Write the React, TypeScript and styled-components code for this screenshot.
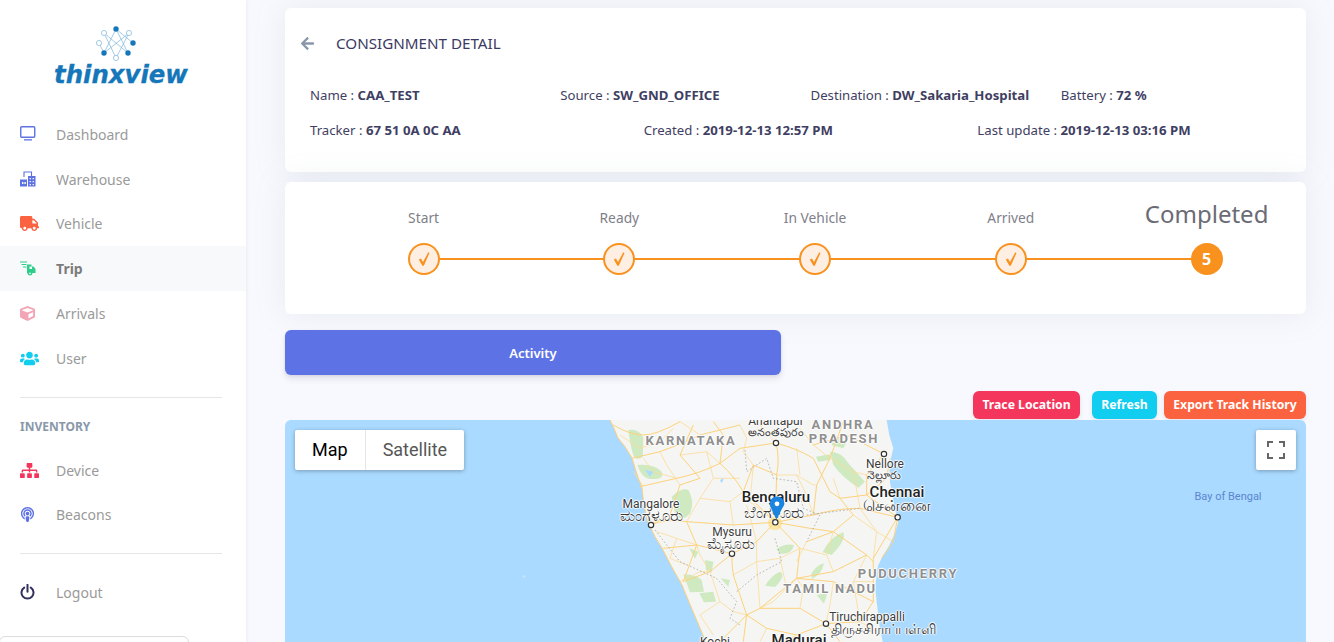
import * as React from 'react'
import styled, { createGlobalStyle } from 'styled-components'
import { FaCube, FaSitemap, FaTruck, FaUsers, FaPodcast, FaArrowLeft } from 'react-icons/fa'

const GlobalStyle = createGlobalStyle`
  html, body {
    margin: 0;
    height: 100%;
    overflow: hidden;
    background: #f8f9fe;
    font-family: "Noto Sans", "Open Sans", sans-serif;
  }
`

const Page = styled.div`
  display: flex;
  height: 642px;
  overflow: hidden;
`

const Sidebar = styled.aside`
  width: 246px;
  flex: none;
  background: #fff;
  box-shadow: 0 0 4px rgba(136, 152, 170, 0.2);
  display: flex;
  flex-direction: column;
`

const Logo = styled.div`
  height: 112px;
  flex: none;
  box-sizing: border-box;
  padding-top: 26px;
  display: flex;
  flex-direction: column;
  align-items: center;
  padding-right: 15px;
`

const LogoName = styled.div`
  font-family: "DejaVu Sans", sans-serif;
  font-style: italic;
  font-weight: 700;
  font-size: 24.4px;
  line-height: 26px;
  margin-left: 11px;
  color: #1577b9;
  -webkit-text-stroke: 0.3px #1577b9;
`

const NavItem = styled.div<{ $active?: boolean }>`
  height: 44.8px;
  flex: none;
  display: flex;
  align-items: center;
  padding-left: 20px;
  font-size: 14px;
  color: ${p => (p.$active ? '#7c7c7c' : '#9a9a9a')};
  font-weight: ${p => (p.$active ? 700 : 400)};
  background: ${p => (p.$active ? '#f8f9fa' : 'transparent')};
`

const NavIcon = styled.span<{ $color: string }>`
  width: 36px;
  flex: none;
  display: flex;
  align-items: center;
  color: ${p => p.$color};
`

const Divider = styled.hr<{ $top: number; $bottom: number }>`
  border: 0;
  border-top: 1px solid #e6e6e6;
  margin: ${p => p.$top}px 24px ${p => p.$bottom}px 20px;
  flex: none;
`

const NavHeading = styled.div`
  font-size: 12px;
  line-height: 18px;
  font-weight: 700;
  color: #8898aa;
  padding-left: 20px;
  margin: 1px 0 12px;
`

const BottomBox = styled.div`
  width: 190px;
  height: 40px;
  margin: 21px 0 0 -1px;
  flex: none;
  box-sizing: border-box;
  border: 1px solid #ddd;
  border-radius: 6px;
`

const Main = styled.main`
  width: 1021px;
  margin-left: 39px;
  padding-top: 8px;
  flex: none;
`

const Card = styled.section<{ $height: number; $bottom: number }>`
  height: ${p => p.$height}px;
  margin-bottom: ${p => p.$bottom}px;
  box-sizing: border-box;
  background: #fff;
  border-radius: 6px;
  box-shadow: 0 0 32px rgba(136, 152, 170, 0.15);
`

const TitleRow = styled.div`
  display: flex;
  align-items: center;
  height: 24px;
  padding: 23px 0 0 15px;
  font-size: 15.2px;
  color: #3b3a63;
`

const BackIcon = styled.span`
  width: 36px;
  display: flex;
  color: #8898aa;
`

const InfoRow = styled.div<{ $cols: number; $top: number }>`
  display: grid;
  grid-template-columns: repeat(${p => p.$cols}, 1fr);
  width: 1001px;
  margin: ${p => p.$top}px 0 0 25px;
  font-size: 13.2px;
  line-height: 18px;
  color: #3f3e63;
  b {
    font-weight: 700;
  }
`

const Steps = styled.div`
  display: grid;
  grid-template-columns: repeat(5, 195.75px);
  margin-left: 40.6px;
`

const Step = styled.div`
  position: relative;
  display: flex;
  flex-direction: column;
  align-items: center;
  width: 32px;
  justify-self: start;
  margin-left: 82px;
`

const StepLabel = styled.div<{ $big?: boolean }>`
  height: 61px;
  box-sizing: border-box;
  display: flex;
  align-items: flex-end;
  white-space: nowrap;
  font-size: ${p => (p.$big ? 24 : 13.8)}px;
  line-height: ${p => (p.$big ? 36 : 20)}px;
  color: ${p => (p.$big ? '#6b6b75' : '#80808a')};
  padding-bottom: ${p => (p.$big ? 11 : 15)}px;
`

const Dot = styled.div<{ $done?: boolean }>`
  width: 32px;
  height: 32px;
  box-sizing: border-box;
  border-radius: 50%;
  border: 2px solid #f9911f;
  background: ${p => (p.$done ? '#ffefe2' : '#f9911f')};
  color: ${p => (p.$done ? '#f9911f' : '#fff')};
  display: flex;
  align-items: center;
  justify-content: center;
  font-size: 16px;
  font-weight: 700;
  z-index: 1;
`

const Connector = styled.div`
  position: absolute;
  left: 16px;
  top: 76px;
  width: 195.75px;
  height: 2px;
  background: #f9911f;
`

const ActivityButton = styled.button`
  display: block;
  width: 496px;
  height: 45px;
  border: 0;
  border-radius: 6px;
  background: #5d72e4;
  color: #fff;
  font-family: inherit;
  font-size: 13px;
  font-weight: 600;
  padding: 0;
  box-shadow: 0 4px 6px rgba(50, 50, 93, 0.11), 0 1px 3px rgba(0, 0, 0, 0.08);
  margin-bottom: 16px;
`

const Actions = styled.div`
  display: flex;
  justify-content: flex-end;
  gap: 7px;
  margin-bottom: 1px;
`

const SmallButton = styled.button<{ $bg: string; $width: number; $after?: number }>`
  width: ${p => p.$width}px;
  height: 28px;
  border: 0;
  border-radius: 6px;
  padding: 0 0 1px;
  background: ${p => p.$bg};
  color: #fff;
  font-family: inherit;
  font-size: 12.2px;
  font-weight: 700;
  white-space: nowrap;
  margin-right: ${p => p.$after ?? 0}px;
  box-shadow: 0 2px 4px rgba(50, 50, 93, 0.1);
`

const MapBox = styled.div`
  position: relative;
  height: 300px;
  background: #aadaff;
  border-radius: 6px 6px 0 0;
  overflow: hidden;
  font-family: Roboto, sans-serif;
`

const MapArt = styled.svg`
  position: absolute;
  left: 0;
  top: 0;
`

const MapTypes = styled.div`
  position: absolute;
  left: 10px;
  top: 10px;
  height: 40px;
  display: flex;
  background: #fff;
  border-radius: 2px;
  box-shadow: 0 1px 4px rgba(0, 0, 0, 0.3);
  font-size: 18px;
  line-height: 40px;
`

const MapType = styled.div<{ $on?: boolean }>`
  padding: 0 17px;
  color: ${p => (p.$on ? '#000' : '#565656')};
  border-right: ${p => (p.$on ? '1px solid #e6e6e6' : '0')};
`

const Fullscreen = styled.div`
  position: absolute;
  right: 10px;
  top: 10px;
  width: 40px;
  height: 40px;
  background: #fff;
  border-radius: 2px;
  box-shadow: 0 1px 4px rgba(0, 0, 0, 0.3);
  display: flex;
  align-items: center;
  justify-content: center;
`

type PlaceKind = 'city' | 'big' | 'state' | 'sea'

const Place = styled.div<{ $x: number; $y: number; $kind: PlaceKind; $size?: number }>`
  position: absolute;
  left: ${p => p.$x - 285}px;
  top: ${p => p.$y - 420}px;
  transform: translate(-50%, -50%);
  white-space: nowrap;
  font-size: ${p => p.$size ?? { city: 12, big: 15, state: 13, sea: 11 }[p.$kind]}px;
  font-weight: ${p => ({ city: 400, big: 500, state: 700, sea: 400 })[p.$kind]};
  letter-spacing: ${p => (p.$kind === 'state' ? '1.7px' : '0')};
  color: ${p => ({ city: '#3c3c3c', big: '#222', state: '#8f8f8f', sea: '#5b86cf' })[p.$kind]};
  text-shadow: ${p =>
    p.$kind === 'sea'
      ? 'none'
      : '-1px 0 1px #fff, 1px 0 1px #fff, 0 -1px 1px #fff, 0 1px 1px #fff'};
  font-family: Roboto, "Noto Sans", "DejaVu Sans", sans-serif;
`

const Pin = styled.svg`
  position: absolute;
  left: 484px;
  top: 76px;
`

type PlaceItem = [string, number, number, PlaceKind, number?]

const places: PlaceItem[] = [
  ['Anantapur', 776, 421, 'city'],
  ['అనంతపురం', 776, 433, 'city', 11],
  ['ANDHRA', 843, 424, 'state'],
  ['PRADESH', 844, 438, 'state'],
  ['KARNATAKA', 691, 440, 'state'],
  ['Nellore', 885, 464, 'city'],
  ['నెల్లూరు', 884, 476, 'city', 11],
  ['Chennai', 897, 492, 'big'],
  ['சென்னை', 897, 506, 'city', 16],
  ['Bengaluru', 776, 497, 'big'],
  ['ಬೆಂಗಳೂರು', 774, 512, 'city', 16],
  ['Mangalore', 651, 504, 'city'],
  ['ಮಂಗಳೂರು', 651, 515, 'city', 16],
  ['Mysuru', 732, 532, 'city'],
  ['ಮೈಸೂರು', 731, 544, 'city', 15],
  ['PUDUCHERRY', 908, 573, 'state'],
  ['TAMIL NADU', 830, 588, 'state'],
  ['Tiruchirappalli', 867, 617, 'city'],
  ['திருச்சிராப்பள்ளி', 883, 630, 'city', 14],
  ['Madurai', 799, 640, 'big'],
  ['Kochi', 715, 642, 'city'],
  ['Bay of Bengal', 1228, 496, 'sea'],
]

// coordinates below are in 3x units, origin at the crop corner (600, 415)
const westCoast =
  'M30 15 L40 35 L54 69 L75 95 L96 129 L110 175 L126 219 L132 270 L144 321 L165 365 L186 399 L215 455 L246 510 L275 580 L300 639 L321 690'
const land =
  westCoast +
  ' L850 690 L840 640 L835 600 L830 560 L826 520 L830 470 L835 450 L850 420 L866 395 L885 355 L895 320 L885 280 L878 245 L870 200 L868 150 L880 100 L868 60 L860 15 Z'

const greens = [
  'M85 45 Q120 40 130 70 L128 125 Q110 140 100 120 Q90 90 85 45 Z',
  'M112 150 Q160 145 185 170 Q195 195 150 192 Q125 190 112 150 Z',
  'M215 245 Q245 215 265 225 Q285 260 270 295 Q245 325 225 295 Z',
  'M690 110 Q725 110 745 145 L795 200 L775 218 Q725 185 700 150 Z',
  'M648 125 L690 118 L690 135 L655 140 Z',
  'M668 412 Q690 365 730 352 Q740 375 695 420 Z',
  'M635 475 Q650 450 672 445 Q665 480 635 492 Z',
  'M495 512 Q515 480 540 470 Q560 480 525 516 Z',
  'M530 402 Q555 385 582 390 Q575 420 540 416 Z',
  'M250 478 Q290 480 305 495 L312 530 L270 532 Z',
  'M298 535 L340 530 L348 560 L312 562 Z',
  'M315 435 L340 440 L335 472 L318 465 Z',
  'M268 400 L295 410 L285 432 Z',
  'M650 540 L682 535 L672 566 Z',
  'M362 490 L390 495 L385 515 Z',
  'M700 60 L740 80 L730 100 L695 90 Z',
]

const roads = [
  'M40 30 Q90 60 130 60 T240 20',
  'M95 130 L180 110 Q240 90 300 60 L420 30',
  'M120 215 L230 190 Q300 175 360 145 Q400 180 430 230 L525 320',
  'M150 330 Q200 310 260 320 L400 330 L525 322',
  'M150 330 L210 300 L240 210 L300 190',
  'M190 400 L290 390 L396 416 L470 380 L525 322',
  'M396 416 Q395 450 400 480 L440 600 L430 680',
  'M396 416 L330 470 L250 500',
  'M528 84 Q540 130 530 180 L526 322',
  'M528 84 Q590 100 640 130 L690 230 L720 250 L800 240',
  'M528 84 L420 100 L360 145',
  'M526 322 L640 300 Q710 280 780 280 L893 307',
  'M526 322 L600 400 L590 490 L480 580 L440 600',
  'M526 322 L630 340 L700 350 L800 420 L820 440',
  'M893 307 L820 430 L820 560 L780 620 L678 626',
  'M893 307 L880 380 L845 430',
  'M852 117 L800 180 L800 240 L893 307',
  'M852 117 L740 60 L640 90',
  'M678 626 L600 580 L480 580',
  'M678 626 L590 660 L560 680',
  'M440 600 L360 680',
  'M678 626 L720 680',
  'M640 300 L650 210 L690 130 L730 20',
  'M300 190 L240 120 L280 30',
  'M360 145 L370 60 L340 20',
  'M720 250 L760 300 L700 350 L620 380',
  'M590 490 L700 470 L800 420',
  'M430 230 L460 150 L530 180',
  'M260 320 L290 390 L250 500',
  'M820 560 L700 500 L590 490',
  'M440 600 L500 640 L590 660',
  'M800 240 L860 190 L870 130',
]

const minorRoads = [
  'M60 60 L120 100 L180 80 L220 40',
  'M130 130 L160 170 L230 190',
  'M180 110 L200 150 L240 210',
  'M240 120 L320 110 L360 145',
  'M420 30 L440 70 L430 110 L460 150',
  'M320 110 L340 190 L300 250 L260 320',
  'M340 190 L420 190',
  'M300 250 L390 260 L430 230',
  'M390 260 L400 330',
  'M440 270 L470 380',
  'M460 150 L450 260 L525 320',
  'M590 180 L640 210 L650 210',
  'M530 180 L590 180 L620 240 L640 300',
  'M590 100 L600 180',
  'M690 130 L760 170 L800 180',
  'M640 90 L690 130',
  'M760 170 L780 280',
  'M720 250 L700 190',
  'M170 350 L230 370 L290 390',
  'M230 370 L210 430 L260 450',
  'M330 470 L300 420 L290 390',
  'M330 470 L360 560 L400 590',
  'M400 480 L470 440 L540 430 L600 400',
  'M470 380 L470 440 L480 580',
  'M540 430 L560 520 L590 490',
  'M600 400 L680 420 L700 350',
  'M680 420 L700 470',
  'M800 420 L760 500 L780 620',
  'M700 500 L690 570 L678 626',
  'M760 500 L820 500',
  'M600 580 L610 520 L590 490',
  'M480 580 L520 560 L560 520',
  'M500 640 L480 680',
  'M780 620 L830 650',
  'M620 380 L590 440',
  'M760 300 L830 350 L880 380',
  'M830 350 L820 430',
  'M780 280 L830 350',
  'M360 560 L300 600 L340 660',
  'M400 590 L440 600',
  'M600 40 L640 90',
  'M240 20 L300 60',
  'M480 30 L528 84',
  'M100 170 L130 215',
  'M240 500 L300 470 L330 470',
]

const borders = [
  'M435 105 L440 170 L500 130 L520 190 L590 200 L610 280 L660 300 L620 380',
  'M165 345 L240 440 L350 490 L410 560 L390 610 L420 630',
  'M525 370 L545 440 L470 480 L410 530',
  'M620 300 L780 280',
]

const towns: [number, number][] = [
  [528, 84], [852, 117], [893, 307], [526, 322], [153, 330], [396, 416], [678, 626],
]

const Lines = ({ items, ...rest }: { items: string[] } & React.SVGProps<SVGGElement>) => (
  <g fill="none" {...rest}>
    {items.map(d => <path key={d} d={d} />)}
  </g>
)

const MapDrawing = () => (
  <MapArt width="1021" height="300" viewBox="0 0 1021 300">
    <g transform="translate(315 -5) scale(0.3333)">
      <path fill="#f5f5f3" d={land} />
      {greens.map(d => <path key={d} d={d} fill="#cfe9c0" />)}
      <circle cx="525" cy="325" r="21" fill="#fde7a5" />
      <Lines items={minorRoads} stroke="#fddc96" strokeWidth="2.4" strokeLinejoin="round" />
      <Lines items={roads} stroke="#fdd27a" strokeWidth="3" strokeLinejoin="round" />
      <path fill="none" stroke="#fdd07a" strokeWidth="3" d={westCoast} />
      <Lines items={borders} stroke="#a8a8a8" strokeWidth="2.4" strokeDasharray="5 6" />
      <path d="M135 165 L160 170 L150 185 Z M360 195 L372 190 L365 205 Z" fill="#aadaff" />
      {towns.map(([cx, cy]) => (
        <circle key={cx} cx={cx} cy={cy} r="8" fill="#fff" stroke="#333" strokeWidth="3.5" />
      ))}
    </g>
    <path d="M237 156 l3 -1 l1 2 l-2 1 Z" fill="#c4e4fd" />
  </MapArt>
)

const LogoMark = () => {
  const hollow = [[103, 33], [128, 33], [98, 43], [115, 58]]
  const solid = [[115, 29], [132, 43], [103, 53], [127, 53]]
  return (
    <svg width="40" height="36" viewBox="95 26 40 36">
      <path
        d="M115 29 L127 53 M115 29 L103 53 M103 33 L115 58 M128 33 L115 58 M128 33 L103 53 M98 43 L103 53 M115 29 L132 43 M103 33 L127 53"
        fill="none"
        stroke="#7db4dc"
        strokeWidth="0.7"
      />
      {hollow.map(([x, y]) => (
        <circle key={x + y} cx={x} cy={y} r="2.6" fill="#fff" stroke="#7db4dc" strokeWidth="0.7" />
      ))}
      {solid.map(([x, y]) => (
        <circle key={x + y} cx={x} cy={y} r="2.7" fill="#1577b9" />
      ))}
    </svg>
  )
}

const TvIcon = () => (
  <svg width="16" height="16" viewBox="0 0 16 16">
    <rect x="0.75" y="0.75" width="14" height="10.5" rx="1" fill="none" stroke="currentColor" strokeWidth="1.4" />
    <rect x="4" y="13.2" width="8" height="1.3" fill="currentColor" />
  </svg>
)

const WarehouseIcon = () => (
  <svg width="16" height="16" viewBox="0 0 16 16">
    <path d="M4 6V1h7.500v4" fill="none" stroke="currentColor" strokeWidth="1.1" />
    <path
      fillRule="evenodd"
      fill="currentColor"
      d="M0 8.500h7V15.500H0Z M8 5h7.500V15.500H8Z M2 11v2h1.400v-2Z M4.400 11v2h1.400v-2Z M9.600 7v1.300h1.300V7Z M12.600 7v1.300h1.300V7Z M9.600 10v1.300h1.300V10Z M12.600 10v1.300h1.300V10Z M9.600 13v1.300h1.300V13Z M12.600 13v1.300h1.300V13Z"
    />
  </svg>
)

const TripIcon = () => (
  <svg width="16" height="15" viewBox="0 0 16 15">
    <rect x="0" y="0.5" width="7" height="1" fill="currentColor" />
    <rect x="1.500" y="3" width="5" height="1" fill="currentColor" />
    <rect x="3" y="5.500" width="3.500" height="1" fill="currentColor" />
    <path d="M7 3.500h4.500v2h2L15.500 8v4H7Z" fill="currentColor" />
    <rect x="9.500" y="5.500" width="2.500" height="2.500" fill="#f8f9fa" />
    <circle cx="10" cy="12.300" r="2.300" fill="currentColor" />
    <circle cx="10" cy="12.300" r="0.900" fill="#f8f9fa" />
  </svg>
)

const PowerIcon = () => (
  <svg width="15" height="16" viewBox="0 0 15 16">
    <path
      d="M4.200 3.600a6 6 0 1 0 6.600 0 M7.500 .8v7"
      fill="none"
      stroke="currentColor"
      strokeWidth="2"
      strokeLinecap="round"
    />
  </svg>
)

const CheckIcon = () => (
  <svg width="12" height="14" viewBox="0 0 12 14">
    <path d="M.8 7.600L3 6.600 5 10 10.300 .3 11.500 .9 5.800 13.700H4.400Z" fill="currentColor" />
  </svg>
)

const ExpandIcon = () => (
  <svg width="18" height="18" viewBox="0 0 18 18">
    <path
      d="M1 6V1h5 M12 1h5v5 M17 12v5h-5 M6 17H1v-5"
      fill="none"
      stroke="#666"
      strokeWidth="2"
    />
  </svg>
)

const stepNames = ['Start', 'Ready', 'In Vehicle', 'Arrived']

export default function App() {
  return (
    <>
      <GlobalStyle />
      <Page>
        <Sidebar>
          <Logo>
            <LogoMark />
            <LogoName>thinxview</LogoName>
          </Logo>
          <NavItem>
            <NavIcon $color="#5e72e4"><TvIcon /></NavIcon>Dashboard
          </NavItem>
          <NavItem>
            <NavIcon $color="#5e72e4"><WarehouseIcon /></NavIcon>Warehouse
          </NavItem>
          <NavItem>
            <NavIcon $color="#fb6340"><FaTruck size={19} /></NavIcon>Vehicle
          </NavItem>
          <NavItem $active>
            <NavIcon $color="#2dce89"><TripIcon /></NavIcon>Trip
          </NavItem>
          <NavItem>
            <NavIcon $color="#f3a4b5"><FaCube size={15} /></NavIcon>Arrivals
          </NavItem>
          <NavItem>
            <NavIcon $color="#11cdef"><FaUsers size={19} /></NavIcon>User
          </NavItem>
          <Divider $top={16} $bottom={19} />
          <NavHeading>INVENTORY</NavHeading>
          <NavItem>
            <NavIcon $color="#f5365c"><FaSitemap size={19} /></NavIcon>Device
          </NavItem>
          <NavItem>
            <NavIcon $color="#5e72e4"><FaPodcast size={15} /></NavIcon>Beacons
          </NavItem>
          <Divider $top={15.4} $bottom={16} />
          <NavItem>
            <NavIcon $color="#32325d"><PowerIcon /></NavIcon>Logout
          </NavItem>
          <BottomBox />
        </Sidebar>
        <Main>
          <Card $height={164} $bottom={10}>
            <TitleRow>
              <BackIcon><FaArrowLeft size={15} /></BackIcon>
              CONSIGNMENT DETAIL
            </TitleRow>
            <InfoRow $cols={4} $top={31}>
              <span>Name : <b>CAA_TEST</b></span>
              <span>Source : <b>SW_GND_OFFICE</b></span>
              <span>Destination : <b>DW_Sakaria_Hospital</b></span>
              <span>Battery : <b>72 %</b></span>
            </InfoRow>
            <InfoRow $cols={3} $top={17}>
              <span>Tracker : <b>67 51 0A 0C AA</b></span>
              <span>Created : <b>2019-12-13 12:57 PM</b></span>
              <span>Last update : <b>2019-12-13 03:16 PM</b></span>
            </InfoRow>
          </Card>
          <Card $height={132} $bottom={16}>
            <Steps>
              {stepNames.map(name => (
                <Step key={name}>
                  <StepLabel>{name}</StepLabel>
                  <Dot $done><CheckIcon /></Dot>
                  <Connector />
                </Step>
              ))}
              <Step>
                <StepLabel $big>Completed</StepLabel>
                <Dot>5</Dot>
              </Step>
            </Steps>
          </Card>
          <ActivityButton>Activity</ActivityButton>
          <Actions>
            <SmallButton $bg="#f5365c" $width={107} $after={5}>Trace Location</SmallButton>
            <SmallButton $bg="#11cdef" $width={65}>Refresh</SmallButton>
            <SmallButton $bg="#fb6340" $width={142}>Export Track History</SmallButton>
          </Actions>
          <MapBox>
            <MapDrawing />
            {places.map(([name, x, y, kind, size]) => (
              <Place key={name} $x={x} $y={y} $kind={kind} $size={size}>{name}</Place>
            ))}
            <Pin width="16" height="24" viewBox="0 0 17 26">
              <path
                d="M8.500 .5C4 .5 .5 4 .5 8.500c0 2 .8 3.600 2 5.600L7.600 25h.6l5.600-11c1.100-1.900 2.700-3.500 2.700-5.500C16.500 4 13 .5 8.500 .5Z"
                fill="#1a84e0"
              />
              <circle cx="8.500" cy="8.500" r="2.600" fill="#fff" />
            </Pin>
            <MapTypes>
              <MapType $on>Map</MapType>
              <MapType>Satellite</MapType>
            </MapTypes>
            <Fullscreen><ExpandIcon /></Fullscreen>
          </MapBox>
        </Main>
      </Page>
    </>
  )
}
